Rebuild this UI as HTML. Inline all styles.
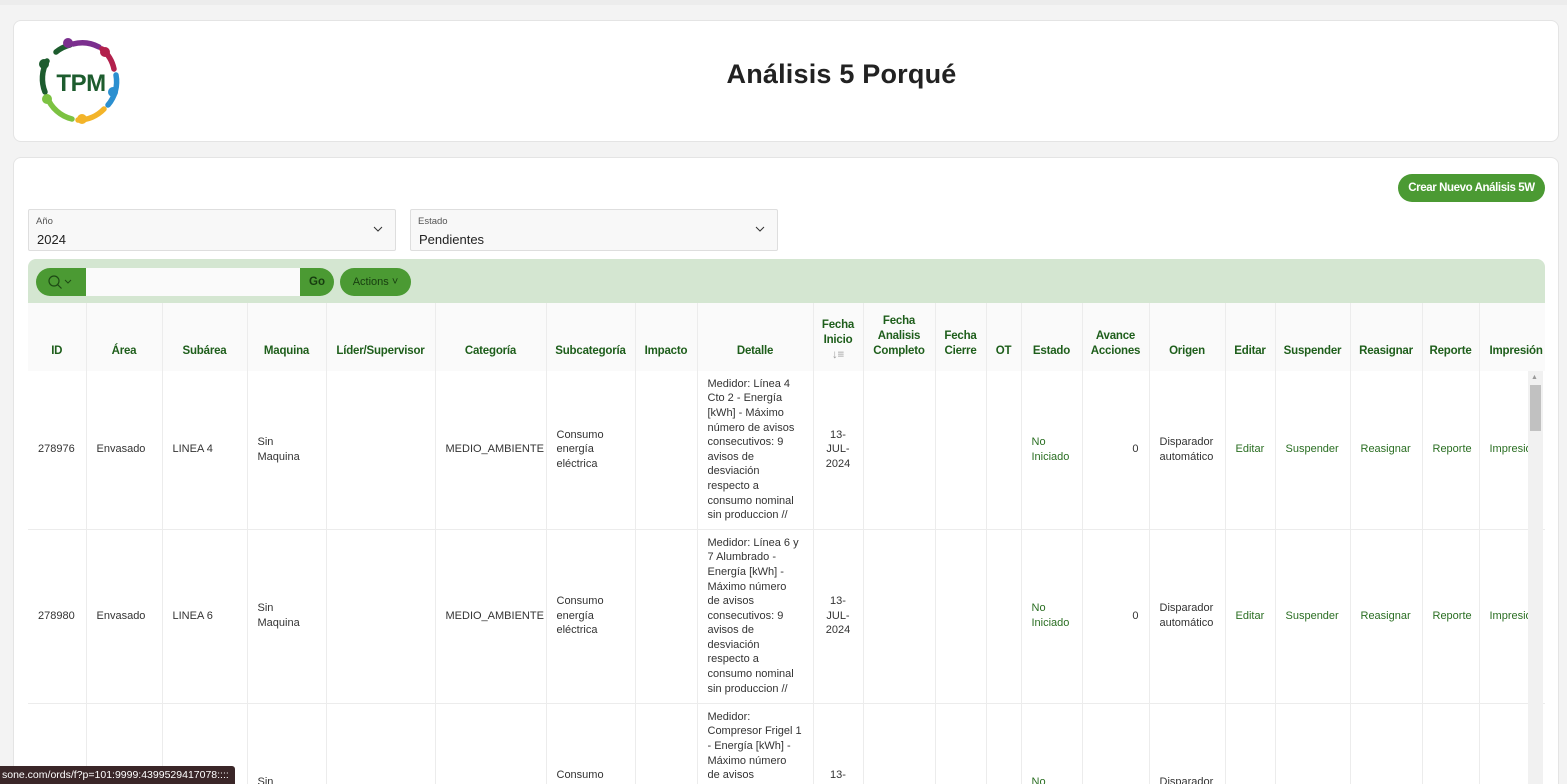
<!DOCTYPE html>
<html><head><meta charset="utf-8">
<style>
*{box-sizing:border-box;margin:0;padding:0}
html,body{width:1567px;height:784px;overflow:hidden}
body{background:#f3f3f3;font-family:"Liberation Sans",sans-serif;color:#333;position:relative}
.card{position:absolute;left:13px;width:1546px;background:#fff;border:1px solid #e4e4e4;border-radius:8px}
h1{position:absolute;top:60px;text-align:center;font-size:27px;font-weight:bold;color:#222;letter-spacing:.2px}
.btn{position:absolute;left:1398px;top:174px;width:147px;height:28px;border-radius:14px;background:#4b9a33;color:#fff;font-size:11.5px;font-weight:bold;text-align:center;line-height:28px;letter-spacing:-.4px}
.sel{position:absolute;top:209px;height:42px;background:#f8f8f8;border:1px solid #dedede;border-radius:2px}
.sel .l{position:absolute;left:7px;top:6px;font-size:9.5px;color:#555}
.sel .v{position:absolute;left:8px;top:22px;font-size:13px;color:#222}
.sel svg{position:absolute;right:12px;top:16px}
.tb{position:absolute;left:28px;top:259px;width:1517px;height:44px;background:#d4e6d1;border-radius:8px 8px 0 0}
.grp{position:absolute;top:268px;height:28px;background:#4b9a33}
.wrap{position:absolute;left:28px;top:303px;width:1517px;height:481px;overflow:hidden;background:#fff}
table{border-collapse:collapse;table-layout:fixed;width:1517px}
th{background:#fafafa;color:#1e5e1b;font-size:11.5px;font-weight:bold;height:68px;vertical-align:bottom;padding:0 4px 12px;border-right:1px solid #ececec;line-height:15px;letter-spacing:-.2px}
td{font-size:11px;line-height:14.6px;padding:0 10px;border-right:1px solid #ececec;border-bottom:1px solid #ececec;vertical-align:middle;color:#333}
td.c{text-align:center}td.r{text-align:right}
td.g{color:#2a6e22}
.sb{position:absolute;left:1528px;top:371px;width:15px;height:413px;background:#f1f1f1}
.tip{position:absolute;left:0;top:766px;width:235px;height:18px;background:#3a2628;color:#fff;font-size:10.5px;line-height:18px;padding-left:2px;border-radius:0 3px 0 0;white-space:nowrap;overflow:hidden}
</style></head><body>
<div style="position:absolute;left:0;top:0;width:1567px;height:5px;background:#ececec"></div>
<div class="card" style="top:20px;height:122px">
<svg style="position:absolute;left:22px;top:16px" width="90" height="90" viewBox="0 0 90 90">
<g fill="none" stroke-width="5.5" stroke-linecap="round">
<path d="M20 15 A36 36 0 0 1 34 8" stroke="#1d5c2e"/>
<path d="M37 7 A36 36 0 0 1 63 10" stroke="#7b2f8e"/>
<path d="M66 12 A36 36 0 0 1 78 32" stroke="#b2204c"/>
<path d="M80 38 A36 36 0 0 1 72 68" stroke="#2b8fd0"/>
<path d="M68 72 A36 36 0 0 1 42 83" stroke="#f3b429"/>
<path d="M36 82 A36 36 0 0 1 11 60" stroke="#7cc242"/>
<path d="M9 55 A36 36 0 0 1 11 24" stroke="#1d5c2e"/>
</g>
<circle cx="32" cy="6" r="5" fill="#7b2f8e"/><circle cx="69" cy="15" r="5" fill="#b2204c"/>
<circle cx="77" cy="55" r="5" fill="#2b8fd0"/><circle cx="46" cy="82" r="5" fill="#f3b429"/>
<circle cx="11" cy="62" r="5" fill="#7cc242"/><circle cx="8" cy="27" r="5" fill="#1d5c2e"/>
<text x="45" y="54" text-anchor="middle" font-family="Liberation Sans" font-weight="bold" font-size="24" fill="#1d5c2e" letter-spacing="-0.5">TPM</text>
</svg>
<h1 style="left:100px;width:1455px;top:38px">Análisis 5 Porqué</h1>
</div>
<div class="card" style="top:157px;height:640px"></div>
<div class="btn">Crear Nuevo Análisis 5W</div>
<div class="sel" style="left:28px;width:368px"><div class="l">Año</div><div class="v">2024</div><svg width="10" height="7"><path d="M1 1l4 4 4-4" stroke="#333" fill="none"/></svg></div>
<div class="sel" style="left:410px;width:368px"><div class="l">Estado</div><div class="v">Pendientes</div><svg width="10" height="7"><path d="M1 1l4 4 4-4" stroke="#333" fill="none"/></svg></div>
<div class="tb"></div>
<div class="grp" style="left:36px;width:50px;border-radius:14px 0 0 14px"><svg width="50" height="28"><circle cx="18" cy="13" r="5" stroke="#1d4a14" fill="none" stroke-width="1.2"/><path d="M21.5 16.5l4 4" stroke="#1d4a14" stroke-width="1.2"/><path d="M29 12l3 3 3-3" stroke="#1d4a14" fill="none"/></svg></div>
<div style="position:absolute;left:86px;top:268px;width:214px;height:28px;background:#fafafa"></div>
<div class="grp" style="left:300px;width:34px;border-radius:0 14px 14px 0;color:#173d10;font-size:11.5px;font-weight:bold;text-align:center;line-height:28px">Go</div>
<div class="grp" style="left:340px;width:71px;border-radius:14px;color:#173d10;font-size:11px;text-align:center;line-height:28px">Actions ˅</div>
<div class="wrap"><table>
<colgroup><col style="width:58px"><col style="width:76px"><col style="width:85px"><col style="width:79px"><col style="width:109px"><col style="width:111px"><col style="width:89px"><col style="width:62px"><col style="width:116px"><col style="width:50px"><col style="width:72px"><col style="width:51px"><col style="width:35px"><col style="width:61px"><col style="width:67px"><col style="width:76px"><col style="width:50px"><col style="width:75px"><col style="width:72px"><col style="width:57px"><col style="width:66px"></colgroup>
<tr><th>ID</th><th>Área</th><th>Subárea</th><th>Maquina</th><th>Líder/Supervisor</th><th>Categoría</th><th>Subcategoría</th><th>Impacto</th><th>Detalle</th><th style="padding-bottom:8px">Fecha Inicio<br><span style="color:#999;font-weight:normal">↓≡</span></th><th>Fecha Analisis Completo</th><th>Fecha Cierre</th><th>OT</th><th>Estado</th><th>Avance Acciones</th><th>Origen</th><th>Editar</th><th>Suspender</th><th>Reasignar</th><th>Reporte</th><th style="white-space:nowrap;text-align:left;padding-left:10px">Impresión</th></tr>
<tr style="height:158px"><td>278976</td><td>Envasado</td><td>LINEA 4</td><td>Sin<br>Maquina</td><td></td><td>MEDIO_AMBIENTE</td><td>Consumo<br>energía<br>eléctrica</td><td></td><td>Medidor: Línea 4<br>Cto 2 - Energía<br>[kWh] - Máximo<br>número de avisos<br>consecutivos: 9<br>avisos de<br>desviación<br>respecto a<br>consumo nominal<br>sin produccion //</td><td class="c" style="padding:0">13-<br>JUL-<br>2024</td><td></td><td></td><td></td><td class="g">No<br>Iniciado</td><td class="r">0</td><td>Disparador<br>automático</td><td class="g">Editar</td><td class="g">Suspender</td><td class="g">Reasignar</td><td class="g">Reporte</td><td class="g" style="white-space:nowrap;overflow:hidden">Impresión</td></tr>
<tr style="height:174px"><td>278980</td><td>Envasado</td><td>LINEA 6</td><td>Sin<br>Maquina</td><td></td><td>MEDIO_AMBIENTE</td><td>Consumo<br>energía<br>eléctrica</td><td></td><td>Medidor: Línea 6 y<br>7 Alumbrado -<br>Energía [kWh] -<br>Máximo número<br>de avisos<br>consecutivos: 9<br>avisos de<br>desviación<br>respecto a<br>consumo nominal<br>sin produccion //</td><td class="c" style="padding:0">13-<br>JUL-<br>2024</td><td></td><td></td><td></td><td class="g">No<br>Iniciado</td><td class="r">0</td><td>Disparador<br>automático</td><td class="g">Editar</td><td class="g">Suspender</td><td class="g">Reasignar</td><td class="g">Reporte</td><td class="g" style="white-space:nowrap;overflow:hidden">Impresión</td></tr>
<tr style="height:174px"><td></td><td></td><td></td><td>Sin<br>Maquina</td><td></td><td></td><td>Consumo<br>energía<br>eléctrica</td><td></td><td>Medidor:<br>Compresor Frigel 1<br>- Energía [kWh] -<br>Máximo número<br>de avisos<br>consecutivos: 9<br>avisos de<br>desviación<br>respecto a<br>consumo nominal<br>sin produccion //</td><td class="c" style="padding:0">13-<br>JUL-<br>2024</td><td></td><td></td><td></td><td class="g">No<br>Iniciado</td><td class="r">0</td><td>Disparador<br>automático</td><td class="g">Editar</td><td class="g">Suspender</td><td class="g">Reasignar</td><td class="g">Reporte</td><td class="g">Impres</td></tr>
</table></div>
<div class="sb"><div style="position:absolute;left:3px;top:3px;font-size:7px;color:#999">▲</div><div style="position:absolute;left:2px;top:14px;width:11px;height:46px;background:#c1c1c1"></div></div>
<div class="tip">sone.com/ords/f?p=101:9999:4399529417078::::</div>
</body></html>
